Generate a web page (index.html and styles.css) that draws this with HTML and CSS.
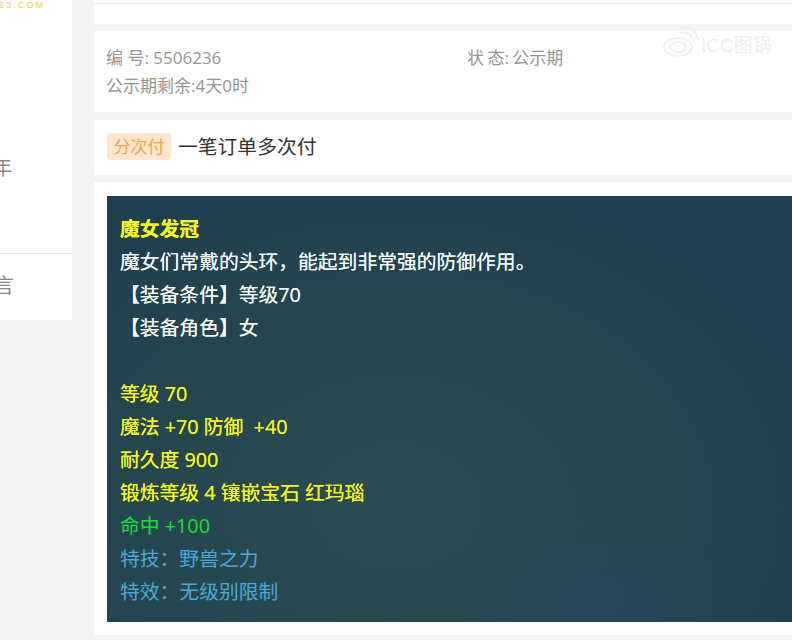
FILE: index.html
```html
<!DOCTYPE html>
<html lang="zh-CN">
<head>
<meta charset="utf-8">
<title>魔女发冠</title>
<link rel="stylesheet" href="styles.css">
</head>
<body>
<div class="page">
  <aside class="side">
    <div class="brand">163.COM</div>
    <div class="side-item item-first">年</div>
    <div class="side-rule"></div>
    <div class="side-item item-last">言</div>
  </aside>
  <main class="main">
    <section class="panel top"><div class="rule"></div></section>
    <section class="panel info">
      <div class="info-row">
        <span class="info-id">编 号: 5506236</span>
        <span class="info-state">状 态: 公示期</span>
      </div>
      <div class="info-row">公示期剩余:4天0时</div>
      <div class="mark">
        <svg width="36" height="32" viewBox="0 0 36 32" fill="none" stroke="#eeeeee" stroke-width="1.6" aria-hidden="true">
          <ellipse cx="15" cy="21" rx="14" ry="9"/>
          <ellipse cx="15" cy="21" rx="8" ry="5"/>
          <path d="M17 7c6-2 12 1 13 8M18 2c9-2 16 3 17 13"/>
        </svg>
        <span class="mark-text">ICC图锅</span>
      </div>
    </section>
    <section class="panel pay">
      <span class="tag">分次付</span>
      <span class="pay-text">一笔订单多次付</span>
    </section>
    <section class="panel desc">
      <div class="box">
        <p class="yellow title">魔女发冠</p>
        <p class="white">魔女们常戴的头环，能起到非常强的防御作用。</p>
        <p class="white">【装备条件】等级70</p>
        <p class="white">【装备角色】女</p>
        <p class="blank">&nbsp;</p>
        <p class="yellow">等级 70</p>
        <p class="yellow">魔法 +70 防御&nbsp; +40</p>
        <p class="yellow">耐久度 900</p>
        <p class="yellow">锻炼等级 4 镶嵌宝石 红玛瑙</p>
        <p class="green">命中 +100</p>
        <p class="blue">特技：野兽之力</p>
        <p class="blue">特效：无级别限制</p>
      </div>
    </section>
  </main>
</div>
</body>
</html>
```
FILE: styles.css
```css
html, body {
  margin: 0;
  height: 100%;
  overflow: hidden;
  background: #f4f4f4;
}
body {
  font-family: "Liberation Sans", "Noto Sans CJK SC", sans-serif;
}
p { margin: 0; }
.page {
  display: grid;
  grid-template-columns: 72px 698px;
  column-gap: 22px;
  align-items: start;
  height: 640px;
  overflow: hidden;
}
.side {
  background: #fff;
  height: 320px;
  overflow: hidden;
  display: flex;
  flex-direction: column;
}
.brand {
  height: 12px;
  margin-left: -8px;
  font-size: 9px;
  line-height: 10px;
  letter-spacing: 2.1px;
  color: #f3c65c;
  white-space: nowrap;
}
.side-item {
  font-size: 20px;
  color: #888;
  line-height: 24px;
  white-space: nowrap;
}
.item-first {
  margin-top: 144px;
  margin-left: -8px;
}
.side-rule {
  margin-top: 73px;
  height: 1px;
  background: #e6e6e6;
}
.item-last {
  margin-top: 20px;
  margin-left: -6px;
}
.main {
  display: flex;
  flex-direction: column;
  gap: 7px;
}
.panel {
  background: #fff;
  box-sizing: border-box;
}
.top {
  height: 24px;
  padding-top: 3px;
}
.rule {
  height: 1px;
  background: #e8e8e8;
}
.info {
  height: 81px;
  padding: 13px 12px 0;
  color: #949494;
  font-family: "Open Sans", "Noto Sans CJK SC", sans-serif;
  font-size: 17px;
  line-height: 28px;
  position: relative;
}
.info-row { display: flex; }
.info-id { width: 361px; }
.info-state { word-spacing: -1px; }
.mark {
  position: absolute;
  left: 569px;
  top: -5px;
  display: flex;
  align-items: flex-end;
  gap: 2px;
}
.mark-text {
  color: #efefef;
  font-family: "Liberation Sans", "Noto Sans CJK SC", sans-serif;
  font-size: 19px;
  line-height: 24px;
  white-space: nowrap;
}
.pay {
  height: 55px;
  margin-top: 1px;
  padding: 13px 13px 0;
  display: flex;
  align-items: flex-start;
  gap: 7px;
}
.tag {
  background: #fde6cc;
  color: #e9a552;
  font-size: 17px;
  line-height: 27px;
  height: 26px;
  padding: 1px 6.5px 0;
  border-radius: 4px;
}
.pay-text {
  color: #333;
  font-size: 19.8px;
  line-height: 28px;
}
.desc {
  height: 453px;
  padding: 14px 0 0 13px;
}
.box {
  box-sizing: border-box;
  height: 426px;
  padding: 16px 13px 0;
  background:
    radial-gradient(ellipse 130px 100px at 490px 410px, rgba(38, 72, 92, 0.8), rgba(38, 72, 92, 0)),
    radial-gradient(ellipse 430px 320px at 290px 310px, #2c4c53 0%, #26474f 55%, #20404f 100%);
  font-family: "Open Sans", "Noto Sans CJK SC", sans-serif;
  font-size: 19.8px;
  line-height: 33px;
  white-space: nowrap;
}
.title { font-weight: 700; }
.yellow { color: #f6f61a; text-shadow: 0 0 0.5px #f6f61a; }
.white { color: #f4f7f7; text-shadow: 0 0 0.5px #f4f7f7; }
.green { color: #12e02f; }
.blue { color: #4aa8dc; }
```
